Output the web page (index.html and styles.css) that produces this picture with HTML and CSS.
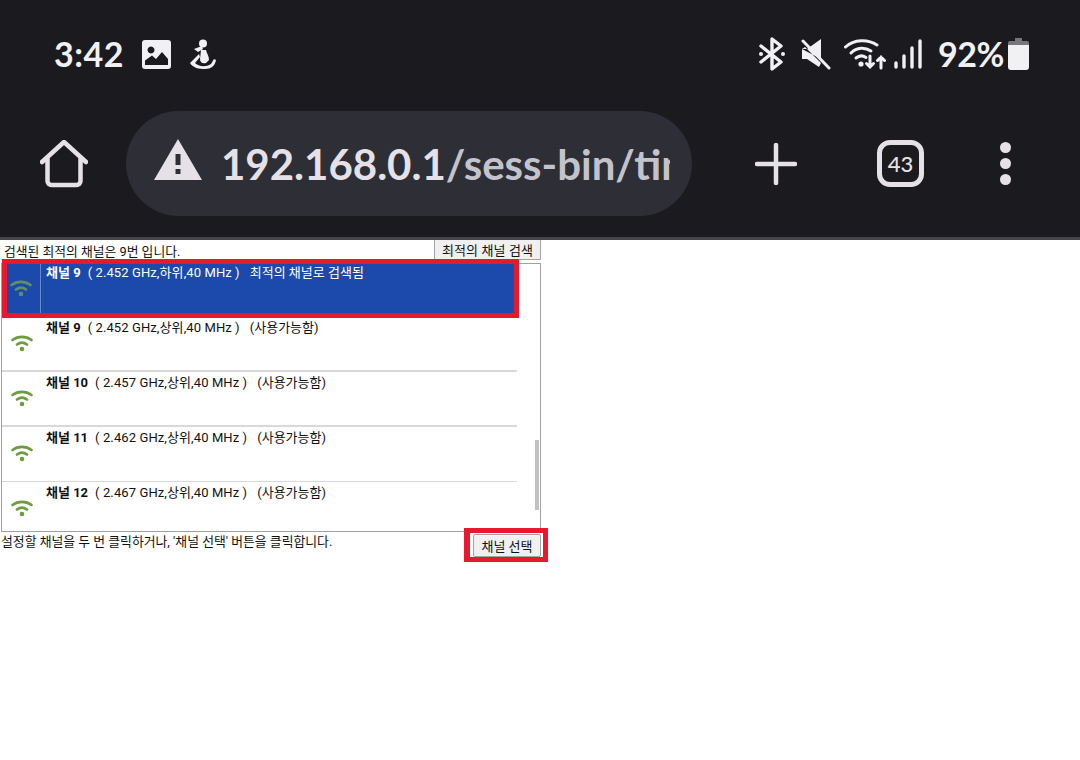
FILE: index.html
```html
<!DOCTYPE html>
<html lang="ko">
<head>
<meta charset="utf-8">
<title>채널 선택</title>
<link rel="stylesheet" href="styles.css">
</head>
<body>
<svg class="defs" width="0" height="0" aria-hidden="true">
  <defs>
    <symbol id="wifi" viewBox="0 0 24 20">
      <path d="M2.500 7C8 2.800 16 2.800 21.500 7" fill="none" stroke="currentColor" stroke-width="2.700" stroke-linecap="round"/>
      <path d="M7 11.500C10 9.200 14 9.200 17 11.500" fill="none" stroke="currentColor" stroke-width="2.700" stroke-linecap="round"/>
      <circle cx="12" cy="16" r="2.300" fill="currentColor"/>
    </symbol>
  </defs>
</svg>
<header class="chrome">
  <div class="status">
    <div class="status-left">
      <span class="time">3:42</span>
      <svg class="ic-gallery" viewBox="0 0 29 29"><path fill="#f1f0f3" fill-rule="evenodd" d="M3 0h23a3 3 0 0 1 3 3v23a3 3 0 0 1-3 3H3a3 3 0 0 1-3-3V3a3 3 0 0 1 3-3zM9 6.500a3.500 3.500 0 1 0 .01 0zM3 25h23v-6l-6-7-6 7-4-3.500-7 5z"/></svg>
      <svg class="ic-figure" viewBox="0 0 28 30"><g fill="#f1f0f3"><circle cx="14" cy="4.500" r="4"/><path d="M5 10l8-3 1 3-5 3z"/><path d="M12 11h5c1 4 3 6 3 10l-3 3c-4 1-6-1-6-4z"/><path d="M1 24l9-9 1 3-5 6c3 3 10 5 16 1l3-5 2 1c-1 6-5 9-11 9S4 29 1 24z"/></g></svg>
    </div>
    <div class="status-right">
      <svg class="ic-bt" viewBox="0 0 28 34"><path d="M3 9l20 16-9 7V2l9 7L3 25" fill="none" stroke="#f1f0f3" stroke-width="3.400" stroke-linejoin="round" stroke-linecap="round"/><circle cx="3" cy="17" r="2" fill="#f1f0f3"/><circle cx="25" cy="17" r="2" fill="#f1f0f3"/></svg>
      <svg class="ic-mute" viewBox="0 0 30 32"><path fill="#f1f0f3" d="M1 11h5L20 1v20zM1 11v10h5l12 8 2-4L4 9z"/><path d="M2 3l26 27" stroke="#f1f0f3" stroke-width="3" stroke-linecap="round"/></svg>
      <svg class="ic-wifi" viewBox="0 0 42 32"><g fill="none" stroke="#f1f0f3" stroke-width="3" stroke-linecap="round"><path d="M1.500 9C10 1 24 1 33 7"/><path d="M7 15C13 9 21 9 27 13"/><path d="M12 20c3-2.500 7-2.500 10-.5"/><path d="M26 18v11m-3.500-3.500L26 29l3.500-3.500"/><path d="M37 30V19m-3.500 3.500L37 19l3.500 3.500"/></g><circle cx="17" cy="26" r="2.600" fill="#f1f0f3"/></svg>
      <svg class="ic-signal" viewBox="0 0 28 30"><g stroke="#f1f0f3" stroke-width="3.400" stroke-linecap="round"><path d="M2 28v-4"/><path d="M10 28V17"/><path d="M18 28V9"/><path d="M26 28V2"/></g></svg>
      <span class="battery-text">92%</span>
      <svg class="ic-battery" viewBox="0 0 21 32"><path fill="#77767b" d="M7 0h7v3h5a2 2 0 0 1 2 2v5H0V5a2 2 0 0 1 2-2h5z"/><path fill="#f1f0f3" d="M0 7h21v22a3 3 0 0 1-3 3H3a3 3 0 0 1-3-3z"/></svg>
    </div>
  </div>
  <div class="toolbar">
    <svg class="ic-home" viewBox="0 0 48 48"><path d="M2 22L24 2l22 20M7.500 18v23a4 4 0 0 0 4 4h25a4 4 0 0 0 4-4V18" fill="none" stroke="#e6e1e6" stroke-width="4.500" stroke-linecap="round" stroke-linejoin="round"/></svg>
    <div class="pill">
      <svg class="ic-warn" viewBox="0 0 48 42"><path fill="#e6e1e6" fill-rule="evenodd" d="M24 0l24 41H0zM21.500 15v11h5V15zM21.500 30v5h5v-5z"/></svg>
      <div class="url"><span class="url-host">192.168.0.1</span>/sess-bin/timepro.cgi</div>
    </div>
    <svg class="ic-plus" viewBox="0 0 42 42"><path d="M21 2v38M2 21h38" stroke="#e6e1e6" stroke-width="4.500" stroke-linecap="round"/></svg>
    <div class="tabs">43</div>
    <div class="dots"><i></i><i></i><i></i></div>
  </div>
</header>
<main class="page">
  <div class="top-row">
    <span class="found">검색된 최적의 채널은 9번 입니다.</span>
    <button class="btn btn-search" type="button">최적의 채널 검색</button>
  </div>
  <div class="listbox">
    <ul class="channels">
      <li class="row selected">
        <div class="cell-icon"><svg class="wifi"><use href="#wifi"/></svg></div>
        <div class="cell-text"><b>채널 9</b><span class="freq">( 2.452 GHz,하위,40 MHz )</span><span class="state">최적의 채널로 검색됨</span></div>
      </li>
      <li class="row">
        <div class="cell-icon"><svg class="wifi"><use href="#wifi"/></svg></div>
        <div class="cell-text"><b>채널 9</b><span class="freq">( 2.452 GHz,상위,40 MHz )</span><span class="state">(사용가능함)</span></div>
      </li>
      <li class="row">
        <div class="cell-icon"><svg class="wifi"><use href="#wifi"/></svg></div>
        <div class="cell-text"><b>채널 10</b><span class="freq">( 2.457 GHz,상위,40 MHz )</span><span class="state">(사용가능함)</span></div>
      </li>
      <li class="row">
        <div class="cell-icon"><svg class="wifi"><use href="#wifi"/></svg></div>
        <div class="cell-text"><b>채널 11</b><span class="freq">( 2.462 GHz,상위,40 MHz )</span><span class="state">(사용가능함)</span></div>
      </li>
      <li class="row">
        <div class="cell-icon"><svg class="wifi"><use href="#wifi"/></svg></div>
        <div class="cell-text"><b>채널 12</b><span class="freq">( 2.467 GHz,상위,40 MHz )</span><span class="state">(사용가능함)</span></div>
      </li>
    </ul>
    <div class="scroll-thumb"></div>
    <div class="mark mark-row"></div>
  </div>
  <div class="bottom-row">
    <span class="hint">설정할 채널을 두 번 클릭하거나, '채널 선택' 버튼을 클릭합니다.</span>
    <button class="btn btn-select" type="button">채널 선택</button>
    <div class="mark mark-btn"></div>
  </div>
</main>
</body>
</html>
```
FILE: styles.css
```css
* { box-sizing: border-box; }
html, body { margin: 0; padding: 0; }
body {
  width: 1080px;
  height: 760px;
  overflow: hidden;
  background: #fff;
  color: #111;
  font-family: Roboto, "Noto Sans CJK KR", sans-serif;
}
svg { display: block; flex: none; }
.defs { position: absolute; }

.chrome {
  height: 240px;
  background: #1b1b1f;
  border-bottom: 3px solid #45454b;
  position: relative;
}
.status {
  height: 111px;
  padding: 36px 51px 0 54px;
  display: flex;
  justify-content: space-between;
  align-items: flex-start;
}
.status-left, .status-right { display: flex; align-items: center; height: 36px; }
.time, .battery-text {
  font-family: Lato, sans-serif;
  font-weight: 700;
  font-size: 34px;
  letter-spacing: -0.5px;
  color: #f1f0f3;
  line-height: 34px;
}
.time { width: 71px; letter-spacing: .5px; }
.ic-gallery { width: 29px; height: 29px; margin-left: 17px; }
.ic-figure { width: 28px; height: 30px; margin-left: 18px; }
.ic-bt { width: 28px; height: 34px; }
.ic-mute { width: 30px; height: 32px; margin-left: 15px; }
.ic-wifi { width: 42px; height: 32px; margin-left: 13px; }
.ic-signal { width: 28px; height: 30px; margin-left: 8px; }
.battery-text { margin-left: 16px; width: 66px; white-space: nowrap; }
.ic-battery { width: 21px; height: 32px; margin-left: 4px; }

.toolbar {
  height: 105px;
  padding-left: 40px;
  display: flex;
  align-items: center;
}
.ic-home { width: 48px; height: 48px; }
.pill {
  width: 566px;
  height: 105px;
  margin-left: 38px;
  padding: 0 22px 0 28px;
  border-radius: 52.500px;
  background: #2d2e36;
  display: flex;
  align-items: center;
}
.ic-warn { width: 48px; height: 42px; margin-top: -7px; }
.url {
  margin-left: 19px;
  flex: 1;
  min-width: 0;
  overflow: hidden;
  white-space: nowrap;
  font-family: Lato, sans-serif;
  font-weight: 700;
  font-size: 42px;
  line-height: 52px;
  color: #c4c3cc;
}
.url-host { color: #e6e1e6; }
.ic-plus { width: 42px; height: 42px; margin-left: 63px; }
.tabs {
  width: 47px;
  height: 47px;
  margin-left: 80px;
  border: 5px solid #e6e1e6;
  border-radius: 13px;
  display: flex;
  align-items: center;
  justify-content: center;
  font-family: Lato, sans-serif;
  font-weight: 500;
  font-size: 22px;
  color: #e6e1e6;
}
.dots {
  margin-left: 76px;
  width: 11px;
  display: flex;
  flex-direction: column;
  gap: 5px;
}
.dots i { width: 11px; height: 11px; border-radius: 50%; background: #e6e1e6; }

.page {
  width: 548px;
  padding-left: 1px;
  font-size: 13px;
}
.top-row {
  width: 540px;
  height: 23px;
  padding-left: 3px;
  display: flex;
  justify-content: space-between;
  align-items: flex-start;
}
.found { margin-top: 4px; line-height: 15px; font-size: 12.800px; }
.btn {
  font: inherit;
  color: #111;
  background: #f0f0f0;
  border: 1px solid #a3a3a3;
  padding: 0;
}
.btn-search { width: 107px; height: 20px; border-top: 0; letter-spacing: .1px; }
.listbox {
  position: relative;
  width: 540px;
  height: 269px;
  border: 1px solid #a0a0a0;
}
.channels {
  list-style: none;
  margin: 0;
  padding: 0;
  width: 515px;
}
.row {
  height: 55px;
  display: flex;
  border-bottom: 2px solid #d9d9d9;
}
.row:nth-child(4) { border-bottom-width: 1px; }
.row:last-child { border-bottom: 0; }
.row.selected { height: 49px; margin-bottom: 4px; background: #1b4aac; color: #fff; border-bottom: 0; }
.cell-icon {
  width: 39px;
  flex: none;
  display: flex;
  justify-content: center;
  padding-top: 14px;
}
.selected .cell-icon { border-right: 1px solid #6a86c9; }
.wifi { width: 24px; height: 20px; color: #6e9c41; }
.selected .wifi { color: #5f8f67; }
.cell-text {
  flex: 1;
  padding: 1px 0 0 5px;
  line-height: 15px;
  display: flex;
  gap: 7px;
  white-space: nowrap;
}
.row:not(.selected) .cell-text { padding-top: 3px; }
.row:not(.selected) .cell-icon { padding-top: 16px; }
.freq { letter-spacing: .1px; }
.state { margin-left: 3px; }
.scroll-thumb {
  position: absolute;
  left: 533px;
  top: 176px;
  width: 4px;
  height: 70px;
  background: #c1c1c1;
}
.mark { position: absolute; border: 5px solid #e8192c; pointer-events: none; }
.mark-row { left: 0; top: -5px; width: 517px; height: 59px; }
.bottom-row {
  position: relative;
  width: 540px;
  height: 29px;
  display: flex;
  justify-content: space-between;
  align-items: flex-start;
}
.hint { margin-top: 2px; line-height: 15px; font-size: 12.850px; }
.btn-select {
  width: 68px;
  height: 23px;
  margin-top: 2px;
  border-radius: 2px;
}
.mark-btn { left: 463px; top: -4px; width: 84px; height: 34px; border-left-width: 6px; }
```
